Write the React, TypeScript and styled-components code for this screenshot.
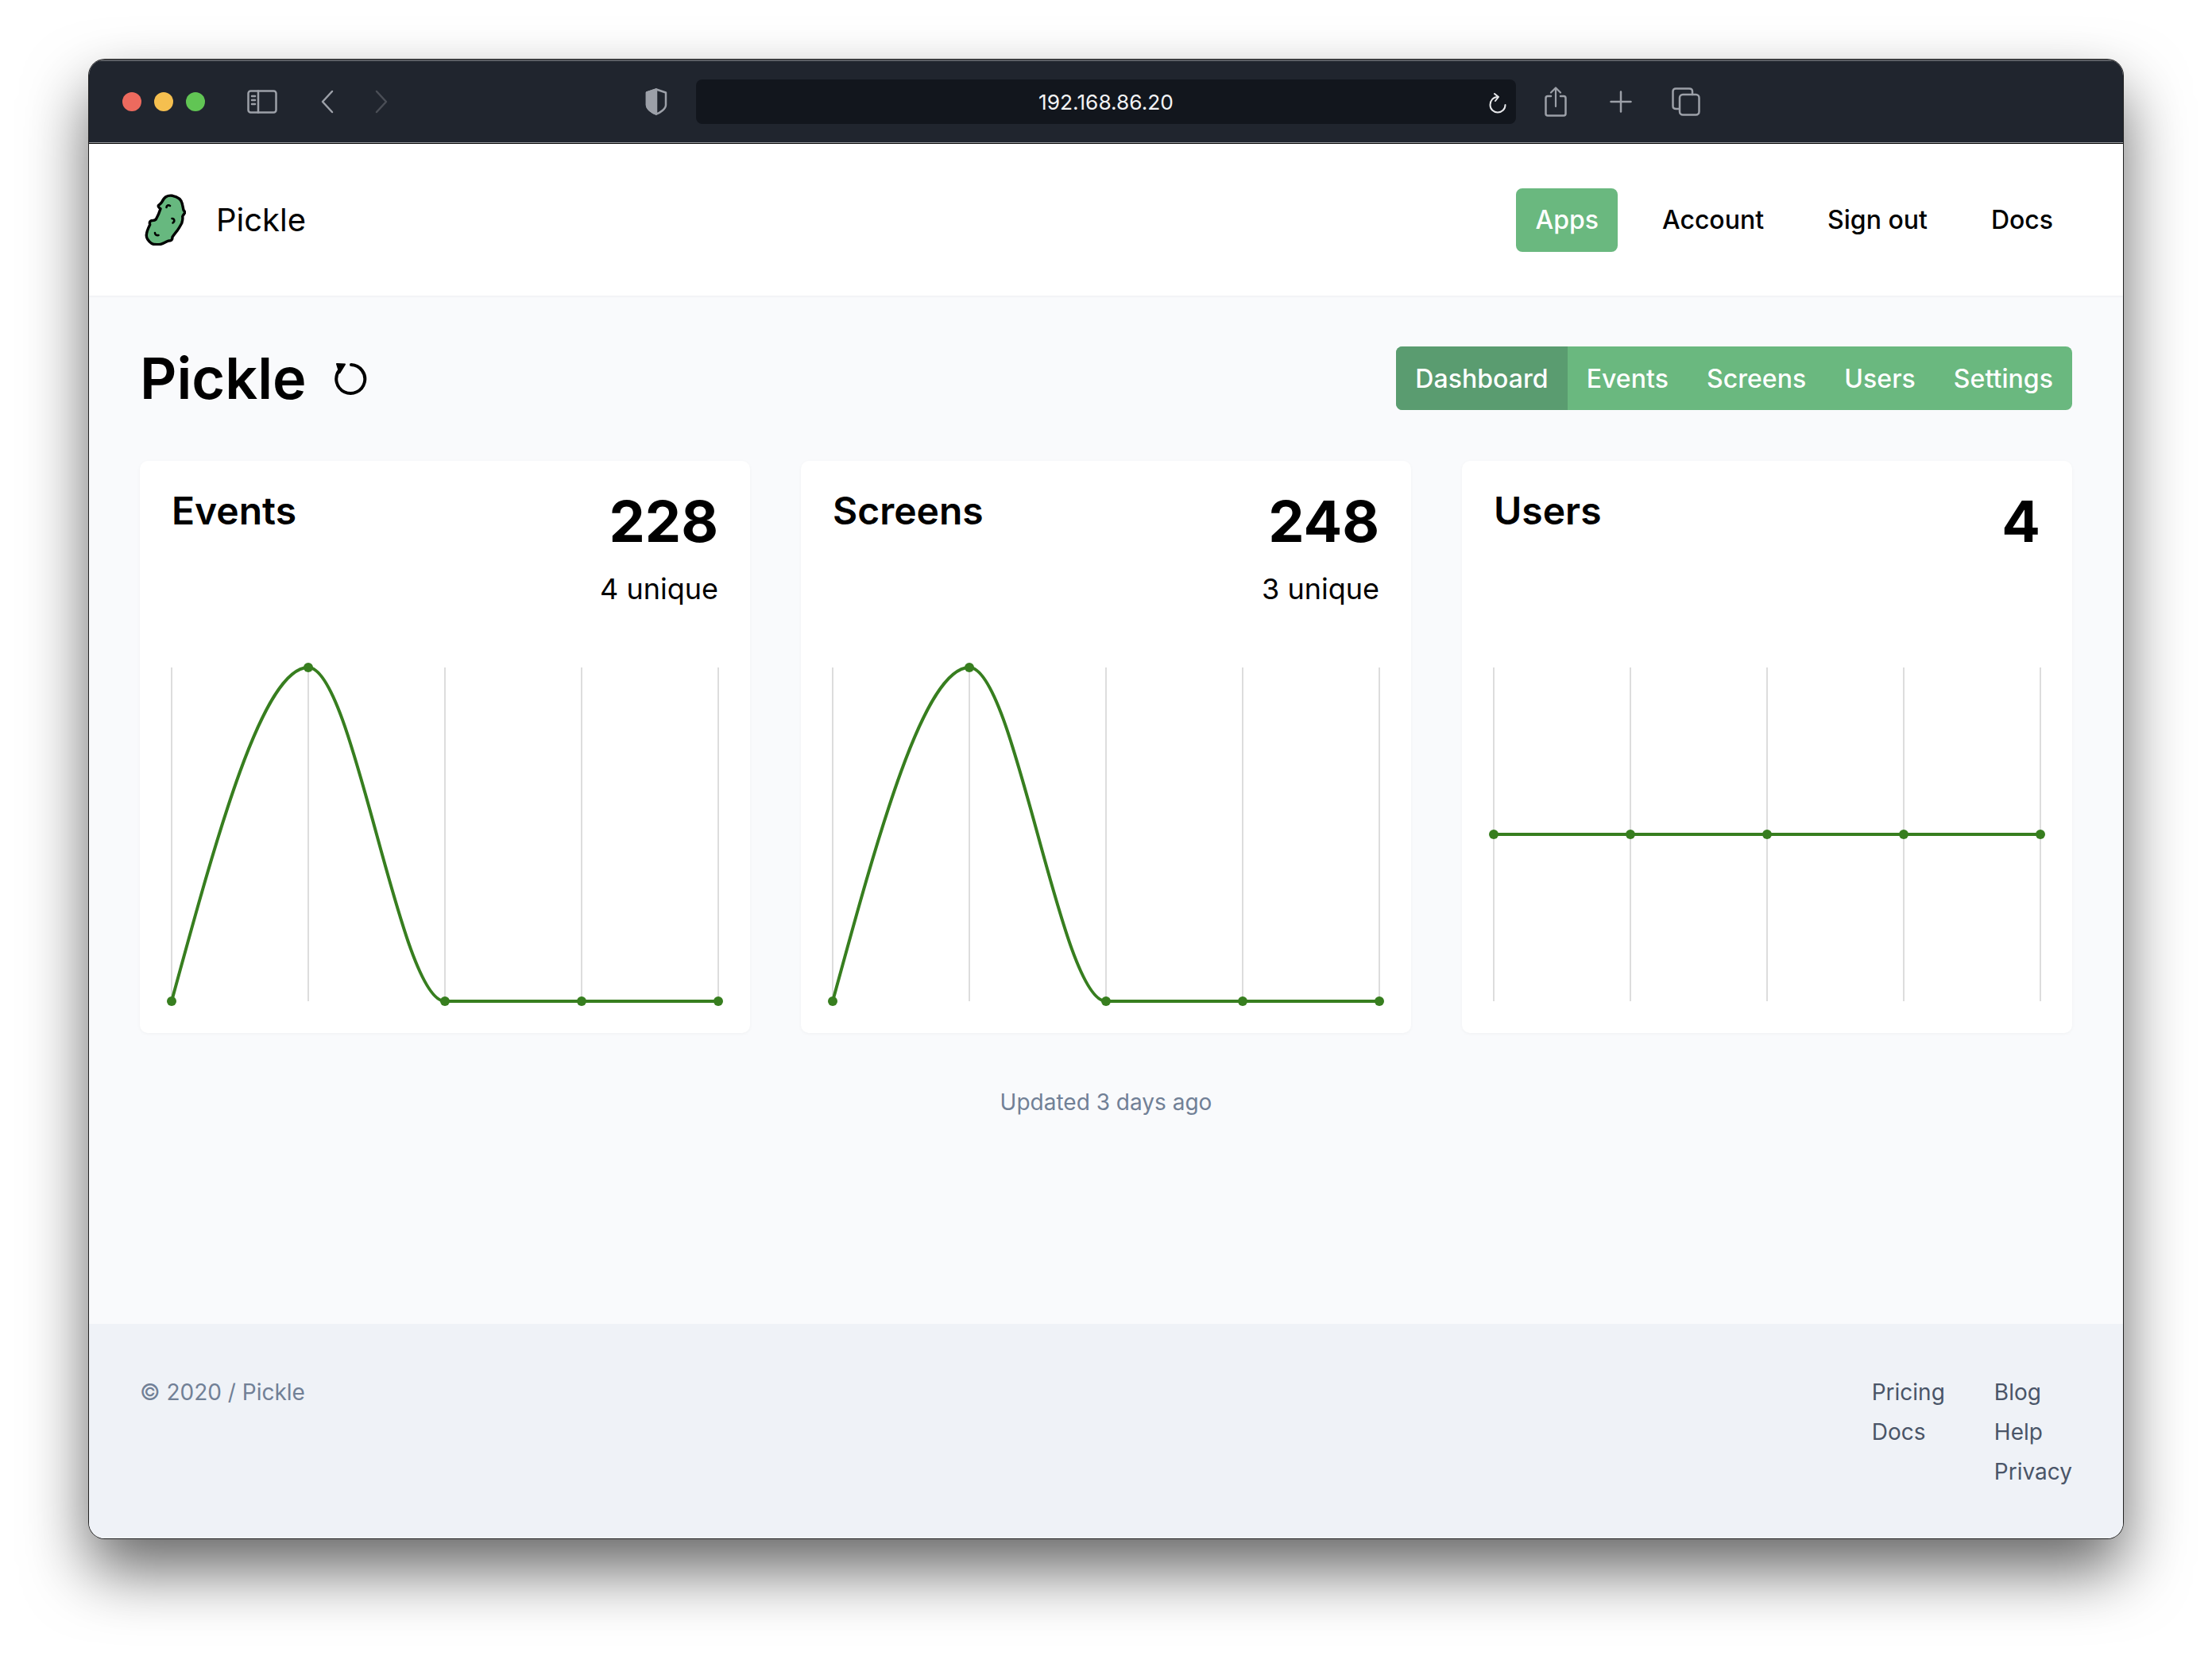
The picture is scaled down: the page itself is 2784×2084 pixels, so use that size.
import React from 'react';
import styled, { createGlobalStyle } from 'styled-components';

const GlobalStyle = createGlobalStyle`
  html, body {
    margin: 0;
    padding: 0;
    background: #fff;
    overflow: hidden;
  }
  body {
    font-family: Inter, "Liberation Sans", sans-serif;
    color: #000;
  }
`;

const Stage = styled.div`
  width: 2784px;
  height: 2084px;
  padding: 75px 112px 148px;
  box-sizing: border-box;
`;

const Window = styled.div`
  height: 100%;
  display: flex;
  flex-direction: column;
  border-radius: 20px;
  overflow: hidden;
  background: #f9fafc;
  box-shadow: 0 0 0 1px #222, 0 40px 80px rgba(0, 0, 0, 0.6);
`;

const TitleBar = styled.div`
  height: 106px;
  flex: none;
  display: flex;
  align-items: center;
  padding: 0 0 1px 42px;
  box-sizing: border-box;
  background: #20252e;
  border-top: 2px solid #5b5e63;
  border-bottom: 1px solid #000;
  box-shadow: inset 0 -1px 0 #9a9ca0;
  color: #9ca0a8;
`;

const Light = styled.span<{ $color: string }>`
  width: 24px;
  height: 24px;
  border-radius: 50%;
  margin-right: 16px;
  background: ${(p) => p.$color};
`;

const ToolIcon = styled.svg<{ $ml: number; $dim?: boolean }>`
  flex: none;
  margin-left: ${(p) => p.$ml}px;
  color: ${(p) => (p.$dim ? '#4a4e56' : 'inherit')};
  fill: none;
  stroke: currentColor;
  stroke-width: 2.5;
  stroke-linecap: round;
  stroke-linejoin: round;
`;

const UrlBar = styled.div`
  position: relative;
  width: 1032px;
  height: 56px;
  margin-left: 36px;
  border-radius: 8px;
  background: #12161d;
  color: #f2f3f5;
  display: flex;
  align-items: center;
  justify-content: center;
  font-size: 26.3px;
`;

const ReloadIcon = styled.svg`
  position: absolute;
  right: 12px;
  top: 17px;
  fill: none;
  stroke: #e6e7ea;
  stroke-width: 2;
  stroke-linecap: round;
  stroke-linejoin: round;
`;

const NavBar = styled.nav`
  height: 191px;
  flex: none;
  display: flex;
  align-items: center;
  justify-content: space-between;
  padding: 0 64px 0 70px;
  box-sizing: border-box;
  background: #fff;
  box-shadow: 0 2px 2px rgba(0, 0, 0, 0.03);
`;

const Brand = styled.div`
  display: flex;
  align-items: center;
  gap: 38px;
  font-size: 40px;
  font-weight: 400;
`;

const NavLinks = styled.div`
  display: flex;
  gap: 32px;
`;

const NavLink = styled.a<{ $active?: boolean }>`
  height: 80px;
  padding: 0 24px;
  display: flex;
  align-items: center;
  border-radius: 8px;
  font-size: 32px;
  font-weight: 500;
  color: ${(p) => (p.$active ? '#fff' : '#000')};
  background: ${(p) => (p.$active ? '#6ab87f' : 'transparent')};
`;

const Main = styled.main`
  flex: 1;
  display: flex;
  flex-direction: column;
  padding: 64px 64px 0;
`;

const PageHeader = styled.div`
  display: flex;
  align-items: center;
  justify-content: space-between;
  height: 80px;
`;

const PageTitle = styled.div`
  display: flex;
  align-items: center;
  gap: 34px;
`;

const Heading = styled.h1`
  margin: 0;
  font-size: 72px;
  font-weight: 600;
  line-height: 80px;
`;

const RefreshIcon = styled.svg`
  fill: none;
  stroke: #000;
  stroke-width: 4;
  stroke-linecap: round;
  stroke-linejoin: round;
`;

const Tabs = styled.div`
  display: flex;
  height: 80px;
  border-radius: 8px;
  overflow: hidden;
  background: #6ab87f;
`;

const Tab = styled.a<{ $active?: boolean }>`
  padding: 0 24px;
  display: flex;
  align-items: center;
  font-size: 32px;
  font-weight: 500;
  letter-spacing: 0.05px;
  color: #fff;
  background: ${(p) => (p.$active ? '#5a9c70' : 'transparent')};
`;

const Cards = styled.div`
  display: grid;
  grid-template-columns: repeat(3, 1fr);
  gap: 64px;
  margin-top: 64px;
`;

const Card = styled.section`
  height: 720px;
  padding: 40px;
  box-sizing: border-box;
  display: flex;
  flex-direction: column;
  background: #fff;
  border-radius: 10px;
  box-shadow: 0 1px 4px rgba(0, 0, 0, 0.04);
`;

const CardHead = styled.div`
  height: 220px;
  flex: none;
  display: flex;
  justify-content: space-between;
`;

const CardTitle = styled.div`
  font-size: 48px;
  font-weight: 600;
  line-height: 46px;
`;

const Stats = styled.div`
  text-align: right;
`;

const StatValue = styled.div`
  font-size: 72px;
  font-weight: 700;
  line-height: 72px;
`;

const StatUnique = styled.div`
  margin-top: 24px;
  font-size: 36px;
  font-weight: 400;
  line-height: 50px;
`;

const ChartSvg = styled.svg`
  display: block;
  overflow: visible;
`;

const Updated = styled.div`
  margin-top: 69px;
  text-align: center;
  font-size: 28px;
  line-height: 36px;
  color: #718096;
`;

const Footer = styled.footer`
  height: 270px;
  flex: none;
  padding: 61px 64px 0;
  box-sizing: border-box;
  display: flex;
  justify-content: space-between;
  background: #eff2f7;
  font-size: 28px;
  line-height: 50px;
`;

const Copyright = styled.div`
  color: #718096;
`;

const FooterLinks = styled.div`
  display: flex;
  gap: 62px;
`;

const FooterColumn = styled.div`
  display: flex;
  flex-direction: column;
  color: #4a5568;
`;

const W = 688;
const H = 420;
const STEP = W / 4;
const LINE_GREEN = '#377e1f';

const peakPath = `M0 ${H} C57.3 210 114.7 0 ${STEP} 0 C229.3 0 286.7 ${H} ${STEP * 2} ${H} L${W} ${H}`;

const Chart: React.FC<{ ys: number[]; path: string }> = ({ ys, path }) => (
  <ChartSvg width={W} height={H} viewBox={`0 0 ${W} ${H}`}>
    {ys.map((_, i) => (
      <line key={i} x1={i * STEP} x2={i * STEP} y1={0} y2={H} stroke="#ddd" strokeWidth={2} />
    ))}
    <path d={path} fill="none" stroke={LINE_GREEN} strokeWidth={4} />
    {ys.map((y, i) => (
      <circle key={i} cx={i * STEP} cy={y} r={6} fill={LINE_GREEN} />
    ))}
  </ChartSvg>
);

const PickleLogo = () => (
  <svg width="52" height="65" viewBox="-1 -1 52 65">
    <path
      d="M34 1.3C40 2.5 45 6 46 10.5C47 14 47.5 17 48 19.3C49 20.5 50 21.5 49.5 23C48.5 25 47 26 46.7 27.7C47.5 30 46.5 33 45.7 36C44 39 42.5 42 40.7 44.3C38 47.5 36 50.5 34 53.3C34 55.5 33.5 57.5 31.5 57.7C30 57.8 28.5 58 27.3 58.7C24 60.5 20.5 62.5 17.3 62.7C13 63 9.5 63 7.3 61C3.5 58 1 55 1.3 51C1.5 46.5 3.5 42 5.7 37.7C5 35.5 5.5 33.5 7.3 32.7C9.5 32.5 11.5 33 13.3 31C15.5 27 17.5 22.5 19 17.7C17 16.5 15.5 14.5 16.7 13.3C18 12.2 19.5 11 20.7 9.3C22 6.5 23.5 4 25.7 2.7C28 1.3 31 .8 34 1.3Z"
      fill="#67b87f"
      stroke="#000"
      strokeWidth="3.4"
      strokeLinejoin="round"
    />
    <path d="M26.5 16C26.5 13.5 29 12.5 31 14" fill="none" stroke="#000" strokeWidth="2.6" strokeLinecap="round" />
    <path d="M33.5 30C36.5 30 37.5 33.5 34.5 35.5" fill="none" stroke="#000" strokeWidth="2.6" strokeLinecap="round" />
    <path d="M12 48C12 50.5 14 51.5 16.5 51" fill="none" stroke="#000" strokeWidth="2.6" strokeLinecap="round" />
  </svg>
);

const App: React.FC = () => {
  return (
    <>
      <GlobalStyle />
      <Stage>
        <Window>
          <TitleBar>
            <Light $color="#ed6a5e" />
            <Light $color="#f5bf4f" />
            <Light $color="#61c554" />
            <ToolIcon $ml={37} width="38" height="30" viewBox="0 0 38 30">
              <rect x="1.5" y="1.5" width="35" height="27" rx="3" />
              <path d="M14 1.5v27M6 8h4M6 13h4M6 18h4" />
            </ToolIcon>
            <ToolIcon $ml={54} width="18" height="30" viewBox="0 0 18 30">
              <path d="M15 2L3 15l12 13" />
            </ToolIcon>
            <ToolIcon $ml={50} $dim width="18" height="30" viewBox="0 0 18 30">
              <path d="M3 2l12 13L3 28" />
            </ToolIcon>
            <ToolIcon $ml={323} width="28" height="34" viewBox="0 0 28 34">
              <path d="M14 1.5L26 5.5V21C26 26 19 31 14 32.5C9 31 2 26 2 21V5.5Z" />
              <path d="M14 1.5V32.5C9 31 2 26 2 21V5.5Z" fill="currentColor" />
            </ToolIcon>
            <UrlBar>
              192.168.86.20
              <ReloadIcon width="22" height="26" viewBox="0 0 22 26">
                <path d="M11 5C5.5 5 1.5 9.5 1.5 15C1.5 20.5 5.8 24.5 11 24.5C16.2 24.5 20.5 20.5 20.5 15" />
                <path d="M7 1l5 4-4 5" />
              </ReloadIcon>
            </UrlBar>
            <ToolIcon $ml={36} width="28" height="38" viewBox="0 0 28 38">
              <path d="M8 12H4C2.5 12 1.5 13 1.5 14.5V34C1.5 35.5 2.5 36.5 4 36.5H24C25.5 36.5 26.5 35.5 26.5 34V14.5C26.5 13 25.5 12 24 12H20" />
              <path d="M14 25V2M8 7.5L14 1.5L20 7.5" strokeWidth="2.2" />
            </ToolIcon>
            <ToolIcon $ml={54} width="28" height="28" viewBox="0 0 28 28">
              <path d="M14 1.5v25M1.5 14h25" />
            </ToolIcon>
            <ToolIcon $ml={50} width="36" height="36" viewBox="0 0 36 36">
              <path d="M9 27H5.5C3 27 1.5 25.5 1.5 23.5V5C1.5 3 3 1.5 5 1.5H22C24.5 1.5 26 3 26 5V9" />
              <rect x="10" y="9" width="24.5" height="25.5" rx="4" />
            </ToolIcon>
          </TitleBar>
          <NavBar>
            <Brand>
              <PickleLogo />
              Pickle
            </Brand>
            <NavLinks>
              <NavLink $active>Apps</NavLink>
              <NavLink>Account</NavLink>
              <NavLink>Sign out</NavLink>
              <NavLink>Docs</NavLink>
            </NavLinks>
          </NavBar>
          <Main>
            <PageHeader>
              <PageTitle>
                <Heading>Pickle</Heading>
                <RefreshIcon width="42" height="44" viewBox="0 1 42 44">
                  <path d="M22 6A18 18 0 1 1 7 13" />
                  <path d="M4 5L14 5.5L7.5 16Z" fill="#000" strokeWidth="2" />
                </RefreshIcon>
              </PageTitle>
              <Tabs>
                <Tab $active>Dashboard</Tab>
                <Tab>Events</Tab>
                <Tab>Screens</Tab>
                <Tab>Users</Tab>
                <Tab>Settings</Tab>
              </Tabs>
            </PageHeader>
            <Cards>
              <Card>
                <CardHead>
                  <CardTitle>Events</CardTitle>
                  <Stats>
                    <StatValue>228</StatValue>
                    <StatUnique>4 unique</StatUnique>
                  </Stats>
                </CardHead>
                <Chart ys={[H, 0, H, H, H]} path={peakPath} />
              </Card>
              <Card>
                <CardHead>
                  <CardTitle>Screens</CardTitle>
                  <Stats>
                    <StatValue>248</StatValue>
                    <StatUnique>3 unique</StatUnique>
                  </Stats>
                </CardHead>
                <Chart ys={[H, 0, H, H, H]} path={peakPath} />
              </Card>
              <Card>
                <CardHead>
                  <CardTitle>Users</CardTitle>
                  <Stats>
                    <StatValue>4</StatValue>
                  </Stats>
                </CardHead>
                <Chart ys={[H / 2, H / 2, H / 2, H / 2, H / 2]} path={`M0 ${H / 2} H${W}`} />
              </Card>
            </Cards>
            <Updated>Updated 3 days ago</Updated>
          </Main>
          <Footer>
            <Copyright>© 2020 / Pickle</Copyright>
            <FooterLinks>
              <FooterColumn>
                <span>Pricing</span>
                <span>Docs</span>
              </FooterColumn>
              <FooterColumn>
                <span>Blog</span>
                <span>Help</span>
                <span>Privacy</span>
              </FooterColumn>
            </FooterLinks>
          </Footer>
        </Window>
      </Stage>
    </>
  );
};

export default App;
